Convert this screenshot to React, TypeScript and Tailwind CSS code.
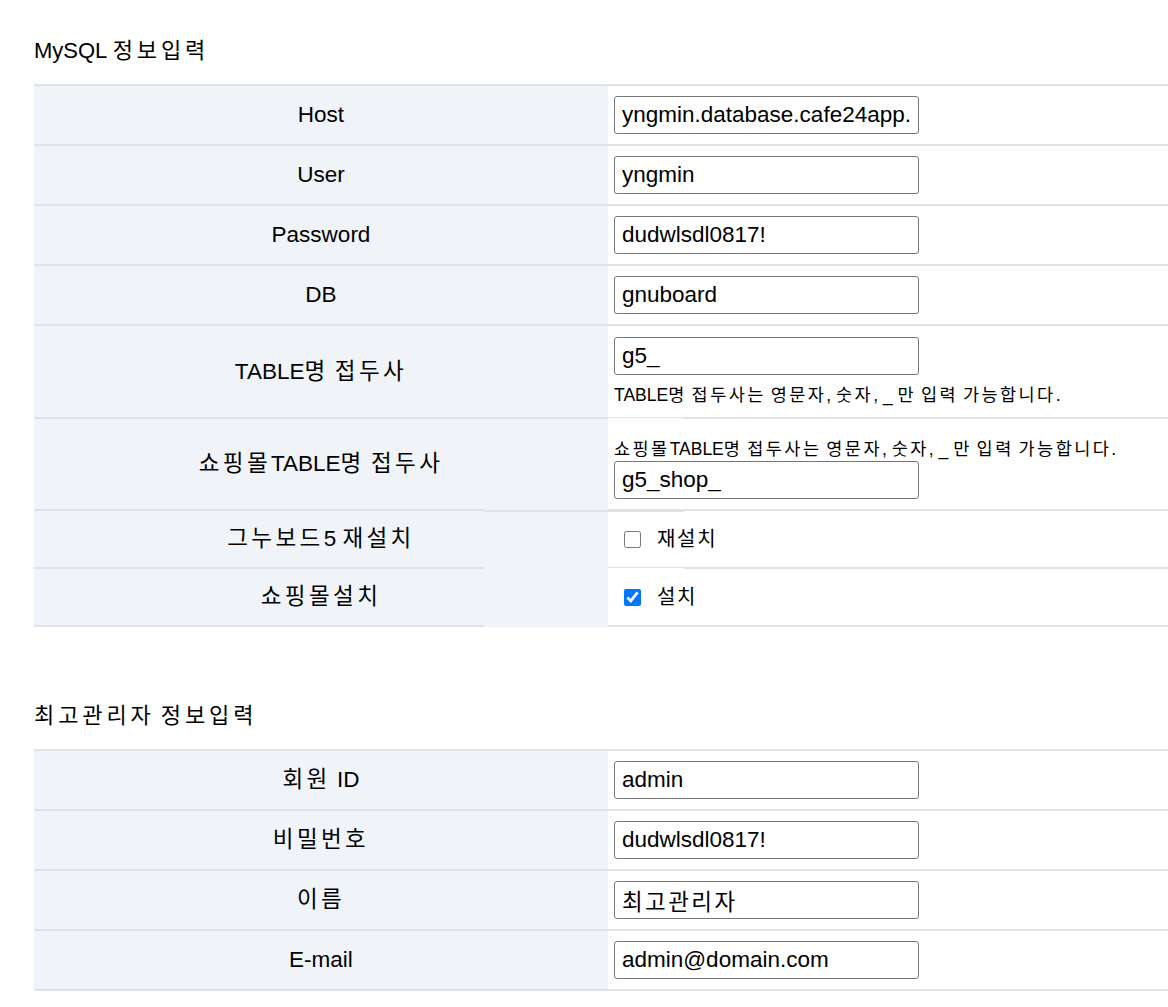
import React from "react";

const rowCls = "flex border-b-2 border-[#dee3e9]";
const thCls =
  "w-[574px] shrink-0 bg-[#f0f4f9] flex items-center justify-center text-[22.5px] text-black";
const inputCls =
  "block w-[305px] h-[38px] border border-[#767676] rounded-[3px] px-[7px] text-[22.5px] text-black bg-white outline-none";
const helpCls = "text-[17.5px] leading-[24px] text-black whitespace-nowrap";

// hangul in the capture is set wider than the latin text around it
function K({ text, cls }: { text: string; cls: string }) {
  const parts = text.split(/([\uAC00-\uD7A3]+)/);
  return (
    <span>
      {parts.map((p, i) =>
        /[\uAC00-\uD7A3]/.test(p) ? (
          <span key={i} className={cls}>
            {p}
          </span>
        ) : (
          p
        )
      )}
    </span>
  );
}

interface TextRowProps {
  label: string;
  value: string;
  inputExtra?: string;
}

function TextRow({ label, value, inputExtra = "" }: TextRowProps) {
  return (
    <div className={rowCls}>
      <div className={`${thCls} h-[58px]`}>
        <K text={label} cls="tracking-[3.4px]" />
      </div>
      <div className="flex-1 flex items-center pl-[6px] overflow-hidden">
        <input type="text" defaultValue={value} className={`${inputCls} ${inputExtra}`} />
      </div>
    </div>
  );
}

interface CheckRowProps {
  label: string;
  text: string;
  checked?: boolean;
}

function CheckRow({ label, text, checked }: CheckRowProps) {
  return (
    <div className={rowCls}>
      <div className={`${thCls} h-[56px]`}>
        <K text={label} cls="tracking-[3.4px]" />
      </div>
      <div className="flex-1 flex items-center pl-[6px]">
        <input
          type="checkbox"
          defaultChecked={checked}
          className="ml-[10px] w-[17px] h-[17px] accent-[#0075ff]"
        />
        <label className="ml-[16px] text-[20px] tracking-[1.7px] text-black">{text}</label>
      </div>
    </div>
  );
}

function Title({ text }: { text: string }) {
  return (
    <h2 className="text-[22px] leading-[28px] text-black">
      <K text={text} cls="tracking-[3.9px]" />
    </h2>
  );
}

const HELP = "TABLE명 접두사는 영문자, 숫자, _ 만 입력 가능합니다.";

export default function App() {
  return (
    <div className="min-h-screen bg-white font-['Liberation_Sans','Noto_Sans_CJK_KR',sans-serif] pl-[34px] overflow-hidden">
      {/* MySQL */}
      <section className="pt-[37px]">
        <Title text="MySQL 정보입력" />
        <div className="relative mt-[19px] border-t-2 border-[#dee3e9]">
          <TextRow label="Host" value="yngmin.database.cafe24app.com" />
          <TextRow label="User" value="yngmin" />
          <TextRow label="Password" value="dudwlsdl0817!" />
          <TextRow label="DB" value="gnuboard" />

          <div className={rowCls}>
            <div className={`${thCls} h-[91px]`}>
              <K text="TABLE명 접두사" cls="tracking-[3.4px]" />
            </div>
            <div className="flex-1 flex flex-col justify-center items-start pl-[6px]">
              <input type="text" defaultValue="g5_" className={inputCls} />
              <p className={`${helpCls} mt-[8px]`}>
                <K text={HELP} cls="tracking-[2.45px]" />
              </p>
            </div>
          </div>

          <div className={rowCls}>
            <div className={`${thCls} h-[90px]`}>
              <K text="쇼핑몰TABLE명 접두사" cls="tracking-[3.4px]" />
            </div>
            <div className="flex-1 flex flex-col justify-center items-start pl-[6px] pt-[8px]">
              <p className={helpCls}>
                <K text={"쇼핑몰" + HELP} cls="tracking-[2.45px]" />
              </p>
              <input type="text" defaultValue="g5_shop_" className={inputCls} />
            </div>
          </div>

          <CheckRow label="그누보드5 재설치" text="재설치" />
          <CheckRow label="쇼핑몰설치" text="설치" checked />

          {/* masked band from the capture */}
          <div className="absolute left-[450px] top-[333px] w-[124px] h-[208px] bg-[#f0f4f9]" />
          <div className="absolute left-[450px] top-[424px] w-[200px] h-[2px] bg-[#dee3e9]" />
          <div className="absolute left-[574px] top-[332px] w-[76px] h-[3px] bg-white" />
          <div className="absolute left-[574px] top-[482px] w-[76px] h-[3px] bg-white" />
        </div>
      </section>

      {/* 최고관리자 */}
      <section className="mt-[75px]">
        <Title text="최고관리자 정보입력" />
        <div className="mt-[19px] border-t-2 border-[#dee3e9]">
          <TextRow label="회원 ID" value="admin" />
          <TextRow label="비밀번호" value="dudwlsdl0817!" />
          <TextRow label="이름" value="최고관리자" inputExtra="tracking-[2.4px]" />
          <TextRow label="E-mail" value="admin@domain.com" />
        </div>
      </section>
    </div>
  );
}
